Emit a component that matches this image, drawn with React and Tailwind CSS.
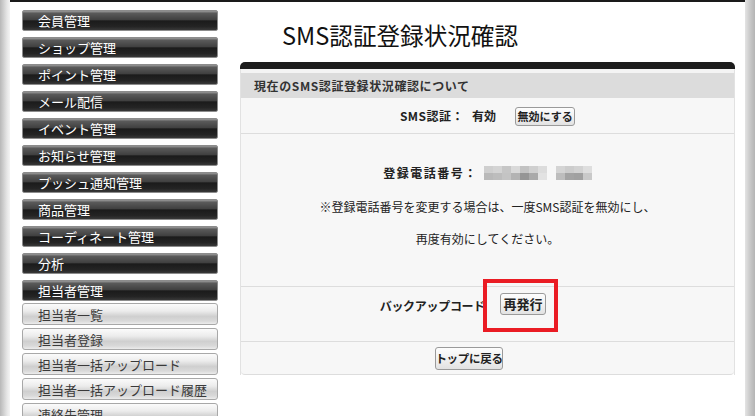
import React from "react";

const dark = [
  "会員管理",
  "ショップ管理",
  "ポイント管理",
  "メール配信",
  "イベント管理",
  "お知らせ管理",
  "プッシュ通知管理",
  "商品管理",
  "コーディネート管理",
  "分析",
  "担当者管理",
];
const light = [
  "担当者一覧",
  "担当者登録",
  "担当者一括アップロード",
  "担当者一括アップロード履歴",
  "連絡先管理",
];

const font = { fontFamily: '"Noto Sans CJK JP", "Noto Sans", sans-serif' };

function Blur() {
  const top1 = ["#cfcfcf", "#d4d4d4", "#c6c6c6", "#d9d9d9", "#c2c2c2", "#cfcfcf", "#dcdcdc"];
  const bot1 = ["#b9b9b9", "#bdbdbd", "#c4c4c4", "#b3b3b3", "#959595", "#a9a9a9", "#e2e2e2"];
  const top2 = ["#d4d4d4", "#cccccc", "#d2d2d2", "#dedede"];
  const bot2 = ["#bdbdbd", "#a3a3a3", "#a0a0a0", "#c9c9c9"];
  return (
    <svg width="108" height="14" viewBox="0 0 108 14" className="ml-[6px]">
      {top1.map((c, i) => (
        <rect key={"a" + i} x={i * 9} y={0} width={9} height={7} fill={c} />
      ))}
      {bot1.map((c, i) => (
        <rect key={"b" + i} x={i * 9} y={7} width={9} height={7} fill={c} />
      ))}
      {top2.map((c, i) => (
        <rect key={"c" + i} x={72 + i * 9} y={0} width={9} height={7} fill={c} />
      ))}
      {bot2.map((c, i) => (
        <rect key={"d" + i} x={72 + i * 9} y={7} width={9} height={7} fill={c} />
      ))}
    </svg>
  );
}

function Btn({ children, className = "" }) {
  return (
    <span
      className={
        "inline-flex items-center justify-center whitespace-nowrap rounded-[3px] border border-[#9a9a9a] bg-[linear-gradient(to_bottom,#fdfdfd_0%,#f1f1f1_50%,#e2e2e2_100%)] font-bold text-[#222] " +
        className
      }
    >
      {children}
    </span>
  );
}

export default function App() {
  return (
    <div className="flex h-[416px] w-[755px] overflow-hidden bg-white" style={font}>
      <div className="h-full w-[10px] shrink-0 bg-[linear-gradient(to_right,#b8b8b8,#e6e6e6_70%,#f4f4f4)]" />
      <div className="flex h-full w-[735px] shrink-0 border-t-[2px] border-[#1a1a1a] bg-white">
        {/* sidebar */}
        <div className="flex w-[230px] shrink-0 flex-col pl-[12px] pt-[8px]">
          <div className="flex flex-col gap-[6px]">
            {dark.map((t) => (
              <div
                key={t}
                className="flex h-[21px] w-[196px] items-center rounded-[2px] border border-[#8c8c8c] bg-[linear-gradient(to_bottom,#9a9a9a_0%,#5a5a5a_12%,#404040_46%,#1b1b1b_52%,#242424_82%,#383838_100%)] pl-[15px] text-[13px] leading-none text-white"
              >
                {t}
              </div>
            ))}
          </div>
          <div className="mt-[2px] flex flex-col gap-[3px]">
            {light.map((t) => (
              <div
                key={t}
                className="flex h-[22px] w-[196px] shrink-0 items-center rounded-[3px] border border-[#a8a8a8] bg-[linear-gradient(to_bottom,#fbfbfb_0%,#ececec_35%,#cfcfcf_62%,#d9d9d9_85%,#ececec_100%)] pl-[15px] text-[13px] leading-none text-[#3a3a3a]"
              >
                {t}
              </div>
            ))}
          </div>
        </div>

        {/* main */}
        <div className="flex w-[495px] shrink-0 flex-col">
          <div className="pl-[42px] pt-[18px] text-[23.6px] leading-[30px] text-[#111]">
            SMS認証登録状況確認
          </div>
          <div className="mt-[12px] flex flex-col">
            <div className="h-[7px] rounded-t-[5px] bg-[#1c1c1c]" />
            <div className="border-x border-[#e2e2e2]">
              <div className="h-[4px] bg-[#f4f4f4]" />
              <div className="flex h-[25px] items-center bg-[#dcdcdc] pl-[13px] text-[12px] font-bold tracking-[0.6px] text-[#333]">
                現在のSMS認証登録状況確認について
              </div>
              <div className="flex h-[36px] items-center justify-center border-b border-[#dddddd] bg-[#f7f7f7] text-[12px] font-bold text-[#222]">
                <span className="tracking-[0.5px]">SMS認証：</span>
                <span className="ml-[8px]">有効</span>
                <Btn className="ml-[19px] mt-[1px] h-[19px] w-[60px] text-[11px]">無効にする</Btn>
              </div>
              <div className="flex h-[153px] flex-col items-center border-b border-[#dddddd] bg-[#f7f7f7] pt-[32px] text-[12px] text-[#222]">
                <div className="flex h-[14px] items-center">
                  <span className="font-bold tracking-[1.5px]">登録電話番号：</span>
                  <Blur />
                </div>
                <div className="mt-[20px] leading-[14px]">
                  ※登録電話番号を変更する場合は、一度SMS認証を無効にし、
                </div>
                <div className="mt-[18px] leading-[14px]">再度有効にしてください。</div>
              </div>
              <div className="relative flex h-[55px] border-b border-[#dddddd] bg-[#f7f7f7] text-[12px] text-[#222]">
                <div className="flex w-[244px] justify-end pt-[10px] font-bold tracking-[-0.3px]">バックアップコード</div>
                <div className="pl-[15px] pt-[6px]">
                  <Btn className="h-[22px] w-[46px] text-[13px]">再発行</Btn>
                </div>
                <div className="absolute left-[242px] top-[-8px] h-[53px] w-[75px] border-[4px] border-[#ea1c24]" />
              </div>
              <div className="flex h-[33px] items-start justify-center rounded-b-[4px] border-b border-[#dddddd] bg-[#f7f7f7] pr-[37px] pt-[5px]">
                <Btn className="h-[23px] w-[68px] text-[11.5px] tracking-[-0.3px]">トップに戻る</Btn>
              </div>
            </div>
          </div>
        </div>
        <div className="w-[10px] shrink-0" />
      </div>
      <div className="h-full w-[10px] shrink-0 bg-[linear-gradient(to_right,#e4e4e4,#c4c4c4_60%,#b4b4b4)]" />
    </div>
  );
}
